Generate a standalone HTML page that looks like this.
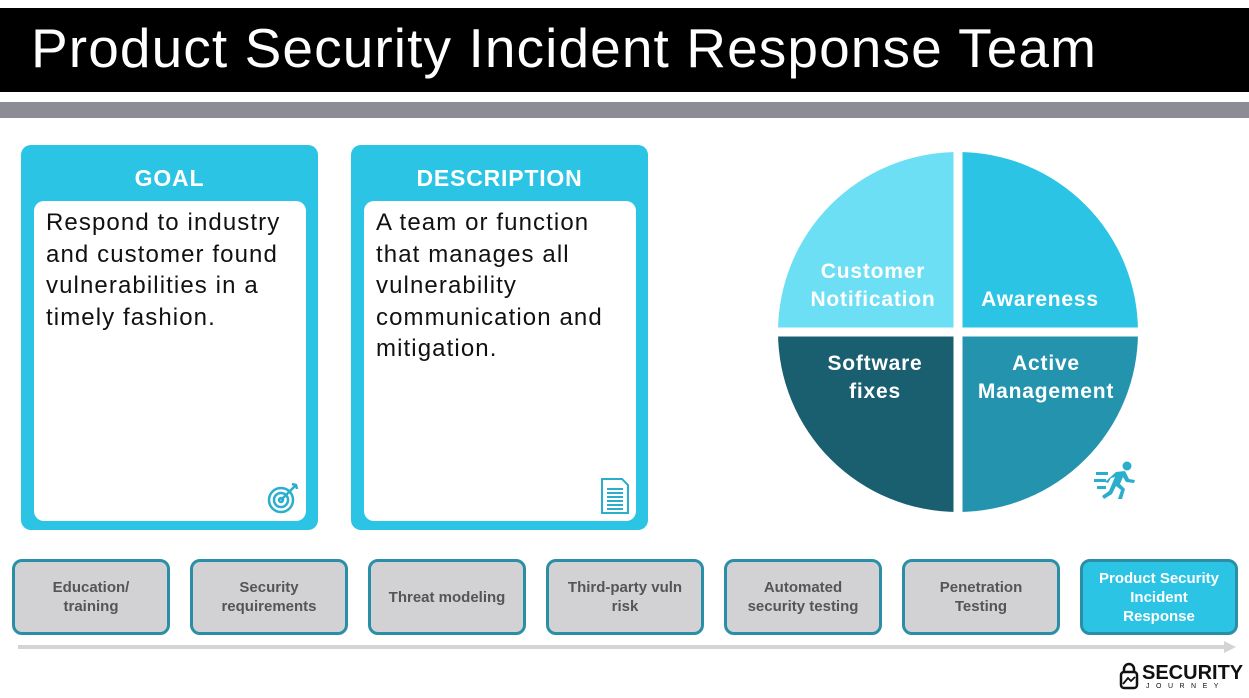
<!DOCTYPE html>
<html><head><style>
body{margin:0;width:1249px;height:698px;background:#fff;position:relative;overflow:hidden;font-family:"Liberation Sans",sans-serif}
.a{position:absolute}
.title{left:0;top:8px;width:1249px;height:84px;background:#000;color:#fff;font-size:55px;line-height:80px;padding-left:31px;box-sizing:border-box;letter-spacing:1.1px}
.card{background:#2cc4e4;border-radius:10px;width:297px;height:385px;top:145px}
.card h2{margin:0;color:#fff;font-size:23px;font-weight:bold;text-align:center;line-height:30px;padding-top:18px;letter-spacing:0.8px}
.inner{position:absolute;left:13px;top:56px;width:272px;height:320px;background:#fff;border-radius:10px;box-sizing:border-box;padding:6px 12px;font-size:24px;line-height:31.5px;color:#111;letter-spacing:1.1px}
.box{top:559px;width:158px;height:76px;box-sizing:border-box;border:3px solid #2a8fa6;border-radius:10px;background:#d2d2d4;color:#555;font-weight:bold;font-size:15px;line-height:19px;display:flex;align-items:center;justify-content:center;text-align:center}
.pl{color:#fff;font-weight:bold;font-size:21px;line-height:28px;text-align:center;letter-spacing:0.8px}
</style></head><body>
<div class="a title">Product Security Incident Response Team</div>
<div class="a" style="left:0;top:102px;width:1249px;height:16px;background:#8c8c94"></div>
<div class="a card" style="left:21px"><h2>GOAL</h2><div class="inner">Respond to industry and customer found vulnerabilities in a timely fashion.
<svg class="a" style="left:232px;top:278px" width="36" height="36" viewBox="0 0 36 36" fill="none" stroke="#2aaecb" stroke-width="2.5"><circle cx="15" cy="21" r="12"/><circle cx="15" cy="21" r="7"/><circle cx="15" cy="21" r="2"/><path d="M15 21L30 6M26 5l4 1 1 4"/></svg></div></div>
<div class="a card" style="left:351px"><h2>DESCRIPTION</h2><div class="inner">A team or function that manages all vulnerability communication and mitigation.
<svg class="a" style="left:236px;top:276px" width="30" height="38" viewBox="0 0 30 38" fill="none" stroke="#2aaecb" stroke-width="2"><path d="M2 2h20l6 6v28H2z"/><path d="M7 12h16M7 16h16M7 20h16M7 24h16M7 28h16M7 32h16"/></svg></div></div>
<svg class="a" style="left:778px;top:152px" width="360" height="360" viewBox="0 0 360 360">
<path d="M180 180V0A180 180 0 0 0 0 180Z" fill="#6ddff5"/>
<path d="M180 180V0A180 180 0 0 1 360 180Z" fill="#2cc4e4"/>
<path d="M180 180H0A180 180 0 0 0 180 360Z" fill="#1a5f70"/>
<path d="M180 180H360A180 180 0 0 1 180 360Z" fill="#2494ae"/>
<path d="M180 0V360M0 180H360" stroke="#fff" stroke-width="9"/>
</svg>
<div class="a pl" style="left:780px;top:258px;width:186px">Customer<br>Notification</div>
<div class="a pl" style="left:962px;top:286px;width:156px">Awareness</div>
<div class="a pl" style="left:790px;top:350px;width:170px">Software<br>fixes</div>
<div class="a pl" style="left:960px;top:350px;width:172px">Active<br>Management</div>
<svg class="a" style="left:1094px;top:460px" width="44" height="40" viewBox="0 0 44 40" fill="#2aaecb"><circle cx="33" cy="6" r="4.5"/><path d="M22 12l9-1 4 8 6 1-1 3-8-1-3-5-3 7 5 5-3 10h-4l3-9-5-4-4 8-8 5-2-3 7-5 6-14-4 1-3 5-3-1z"/><rect x="2" y="12" width="12" height="3"/><rect x="0" y="19" width="12" height="3"/><rect x="3" y="26" width="9" height="3"/></svg>
<div class="a box" style="left:12px">Education/<br>training</div>
<div class="a box" style="left:190px">Security<br>requirements</div>
<div class="a box" style="left:368px">Threat modeling</div>
<div class="a box" style="left:546px">Third-party vuln<br>risk</div>
<div class="a box" style="left:724px">Automated<br>security testing</div>
<div class="a box" style="left:902px">Penetration<br>Testing</div>
<div class="a box" style="left:1080px;background:#2cc4e4;color:#fff">Product Security<br>Incident<br>Response</div>
<div class="a" style="left:18px;top:645px;width:1210px;height:4px;background:#d4d4d6"></div>
<div class="a" style="left:1224px;top:641px;width:0;height:0;border-left:12px solid #d4d4d6;border-top:6px solid transparent;border-bottom:6px solid transparent"></div>
<svg class="a" style="left:1119px;top:662px" width="20" height="28" viewBox="0 0 20 28" fill="none" stroke="#111" stroke-width="2.5"><path d="M5 10V7a5 5 0 0 1 10 0v3"/><rect x="2" y="10" width="16" height="16" rx="3"/><path d="M4 22l5-6 3 3 4-4" stroke-width="1.8"/></svg>
<div class="a" style="left:1142px;top:662px;font-size:20px;font-weight:bold;color:#111;line-height:22px">SECURITY</div>
<div class="a" style="left:1146px;top:683px;font-size:7px;letter-spacing:6.5px;color:#111">JOURNEY</div>
</body></html>
